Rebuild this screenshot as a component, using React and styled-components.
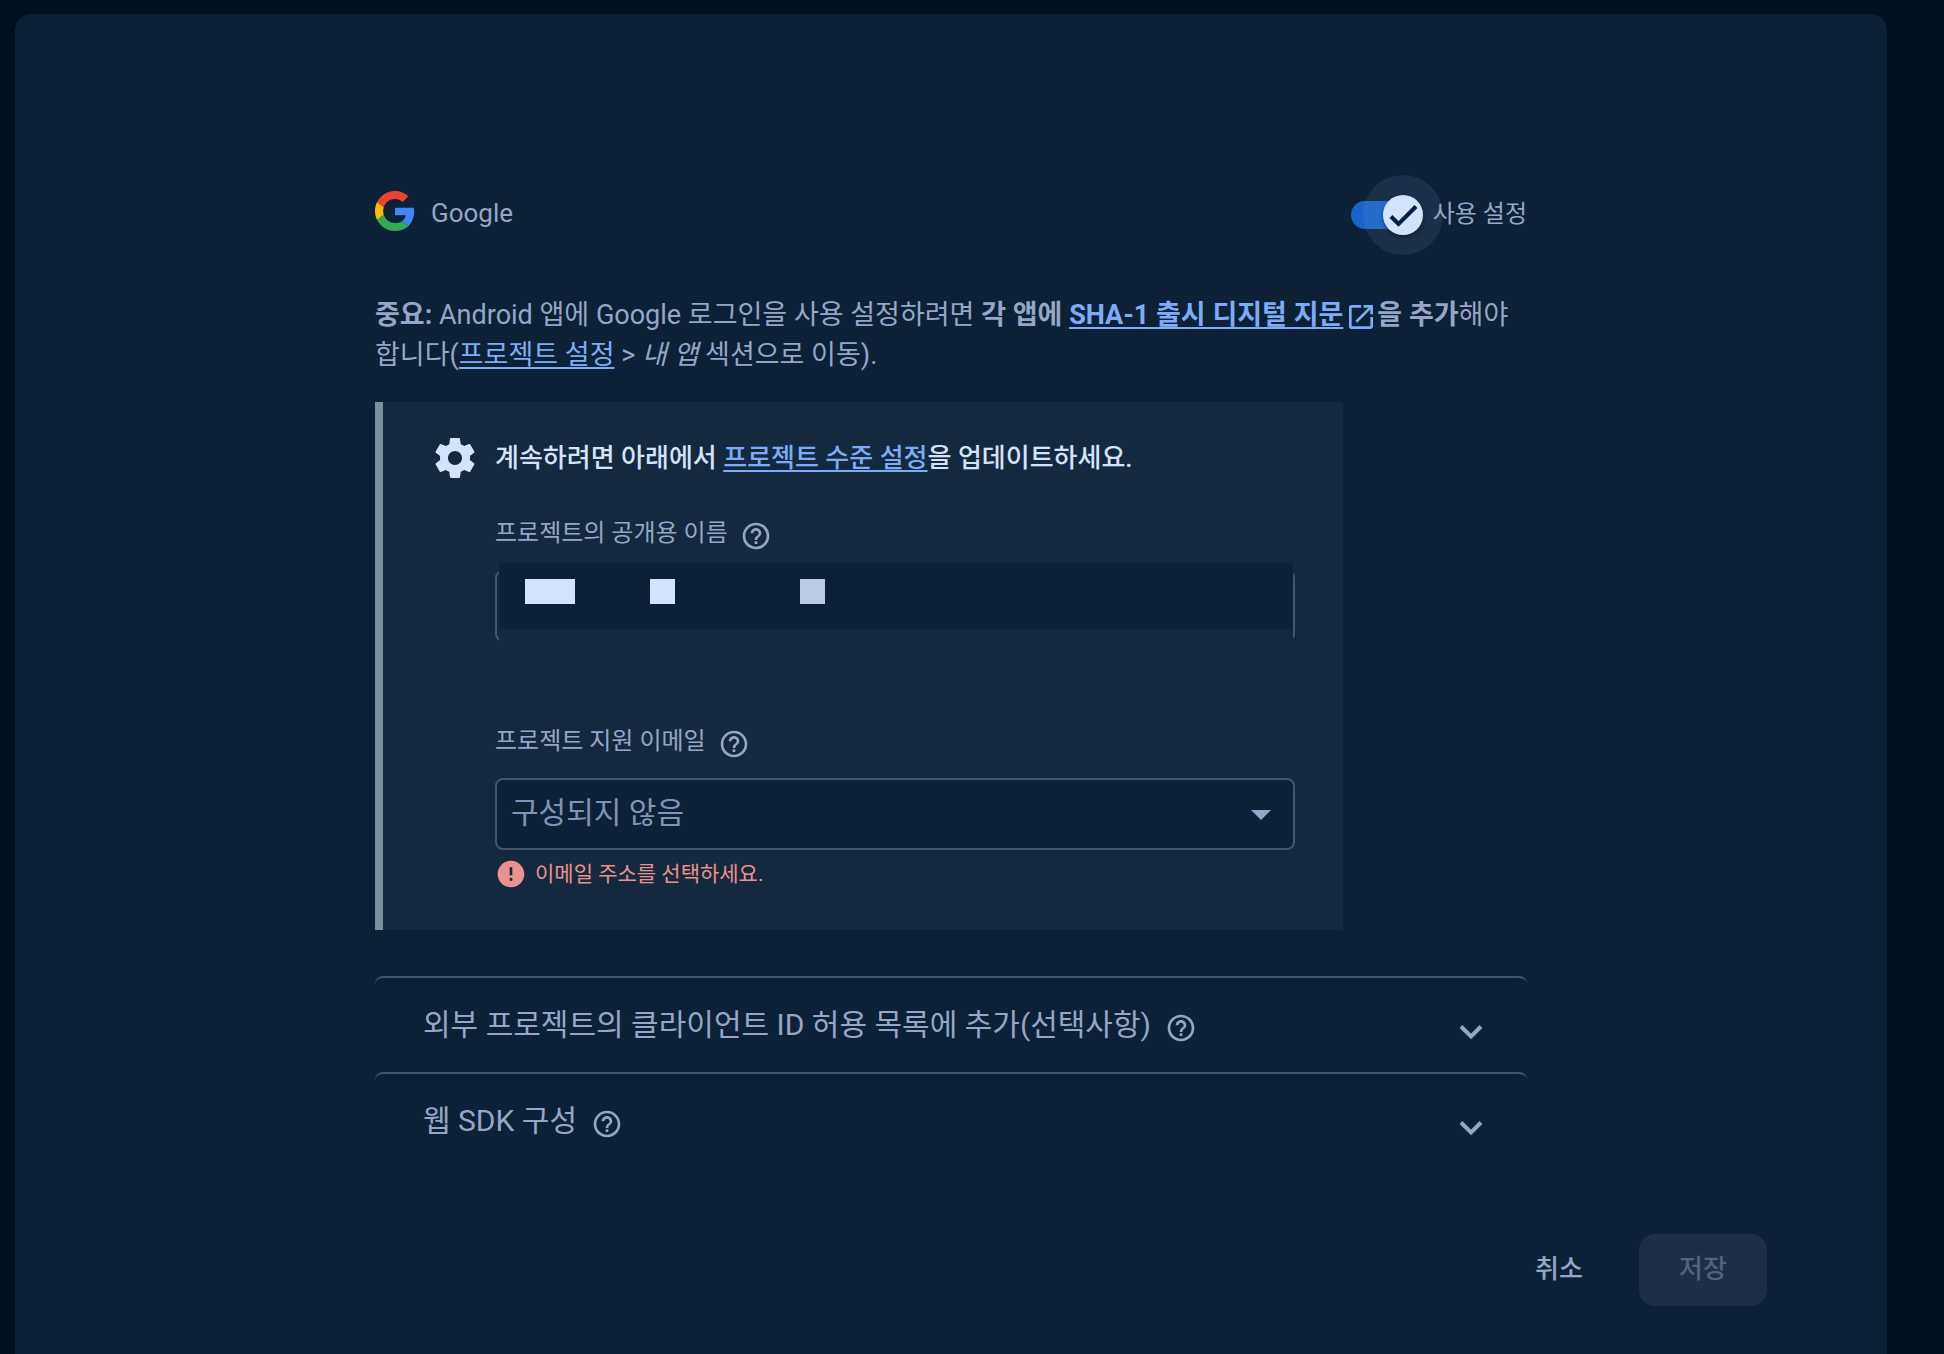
import React, { useState } from 'react'
import styled, { createGlobalStyle } from 'styled-components'
import {
	MdArrowDropDown,
	MdError,
	MdHelpOutline,
	MdOpenInNew,
} from 'react-icons/md'

const GlobalStyle = createGlobalStyle`
	* {
		box-sizing: border-box;
	}

	body {
		margin: 0;
		background: #011122;
		color: #96a6c6;
		font-family: Roboto, 'Noto Sans CJK KR', sans-serif;
		font-size: 26px;
		line-height: 40px;
		word-break: keep-all;
	}

	button,
	input,
	select {
		font: inherit;
		color: inherit;
	}
`

const GoogleLogo = () => (
	<svg width='40' height='40' viewBox='0 0 48 48' aria-hidden='true'>
		<path
			fill='#ea4335'
			d='M24 9.5c3.54 0 6.71 1.22 9.21 3.6l6.85-6.85C35.9 2.38 30.47 0 24 0 14.62 0 6.51 5.38 2.56 13.22l7.98 6.19C12.43 13.72 17.74 9.5 24 9.5z'
		/>
		<path
			fill='#4285f4'
			d='M46.98 24.55c0-1.57-.15-3.09-.38-4.55H24v9.02h12.94c-.58 2.96-2.26 5.48-4.78 7.18l7.73 6c4.51-4.18 7.09-10.36 7.09-17.65z'
		/>
		<path
			fill='#fbbc05'
			d='M10.53 28.59c-.48-1.45-.76-2.99-.76-4.59s.27-3.14.76-4.59l-7.98-6.19C.92 16.46 0 20.12 0 24c0 3.88.92 7.54 2.56 10.78l7.97-6.19z'
		/>
		<path
			fill='#34a853'
			d='M24 48c6.48 0 11.93-2.13 15.89-5.81l-7.73-6c-2.15 1.45-4.92 2.3-8.16 2.3-6.26 0-11.57-4.22-13.47-9.91l-7.98 6.19C6.51 42.62 14.62 48 24 48z'
		/>
	</svg>
)

const GearIcon = () => (
	<svg width='48' height='48' viewBox='0 0 24 24' fill='#d3e3fd' aria-hidden='true'>
		<path d='M19.43 12.98c.04-.32.07-.64.07-.98s-.03-.66-.07-.98l2.11-1.65c.19-.15.24-.42.12-.64l-2-3.46c-.12-.22-.39-.3-.61-.22l-2.49 1c-.52-.4-1.08-.73-1.69-.98l-.38-2.65C14.46 2.18 14.25 2 14 2h-4c-.25 0-.46.18-.49.42l-.38 2.65c-.61.25-1.17.59-1.69.98l-2.49-1c-.23-.09-.49 0-.61.22l-2 3.46c-.13.22-.07.49.12.64l2.11 1.65c-.04.32-.07.65-.07.98s.03.66.07.98l-2.11 1.65c-.19.15-.24.42-.12.64l2 3.46c.12.22.39.3.61.22l2.49-1c.52.4 1.08.73 1.69.98l.38 2.65c.03.24.24.42.49.42h4c.25 0 .46-.18.49-.42l.38-2.65c.61-.25 1.17-.59 1.69-.98l2.49 1c.23.09.49 0 .61-.22l2-3.46c.12-.22.07-.49-.12-.64l-2.11-1.65zM12 15.5c-1.93 0-3.5-1.57-3.5-3.5s1.57-3.5 3.5-3.5 3.5 1.57 3.5 3.5-1.57 3.5-3.5 3.5z' />
	</svg>
)

const ChevronIcon = () => (
	<svg width='24' height='16' viewBox='0 0 24 16' aria-hidden='true'>
		<path d='M2 2.5l10 10 10-10' fill='none' stroke='currentColor' strokeWidth='4' />
	</svg>
)

const CheckIcon = () => (
	<svg width='32' height='32' viewBox='0 0 32 32' aria-hidden='true'>
		<path d='M4 17.500l7.500 7.500L29 7.500' fill='none' stroke='#041e49' strokeWidth='4' />
	</svg>
)

const App = () => {
	const [enabled, setEnabled] = useState(true)

	return (
		<>
			<GlobalStyle />
			<Card>
				<Content>
					<Header>
						<Provider>
							<GoogleLogo />
							<span>Google</span>
						</Provider>
						<SwitchLabel>
							<Switch>
								<input
									type='checkbox'
									checked={enabled}
									onChange={(e) => setEnabled(e.target.checked)}
								/>
								<Thumb $on={enabled}>{enabled && <CheckIcon />}</Thumb>
							</Switch>
							<span>사용 설정</span>
						</SwitchLabel>
					</Header>

					<Notice>
						<b>중요:</b> Android 앱에 Google 로그인을 사용 설정하려면{' '}
						<b>
							각 앱에 <Anchor href='#sha'>SHA-1 출시 디지털 지문</Anchor>
							<MdOpenInNew />을 추가
						</b>
						해야 합니다(<Anchor href='#settings'>프로젝트 설정</Anchor> &gt;{' '}
						<i>내 앱</i> 섹션으로 이동).
					</Notice>

					<Callout>
						<CalloutTitle>
							<GearIcon />
							<p>
								계속하려면 아래에서{' '}
								<Anchor href='#project'>프로젝트 수준 설정</Anchor>을
								업데이트하세요.
							</p>
						</CalloutTitle>

						<Field>
							<FieldLabel>
								<label htmlFor='public-name'>프로젝트의 공개용 이름</label>
								<MdHelpOutline />
							</FieldLabel>
							<Control>
								<input id='public-name' type='text' />
								<Mask aria-hidden='true'>
									<Block $wide />
									<Block />
									<Block $dim />
								</Mask>
							</Control>
						</Field>

						<Field>
							<FieldLabel>
								<label htmlFor='support-email'>프로젝트 지원 이메일</label>
								<MdHelpOutline />
							</FieldLabel>
							<Control>
								<select id='support-email'>
									<option>구성되지 않음</option>
								</select>
								<MdArrowDropDown />
							</Control>
							<FieldError>
								<MdError />
								<span>이메일 주소를 선택하세요.</span>
							</FieldError>
						</Field>
					</Callout>

					<Section type='button'>
						<span>외부 프로젝트의 클라이언트 ID 허용 목록에 추가(선택사항)</span>
						<MdHelpOutline />
						<ChevronIcon />
					</Section>
					<Section type='button'>
						<span>웹 SDK 구성</span>
						<MdHelpOutline />
						<ChevronIcon />
					</Section>
				</Content>

				<Actions>
					<Button type='button'>취소</Button>
					<Button type='button' disabled>
						저장
					</Button>
				</Actions>
			</Card>
		</>
	)
}

export default App

const Card = styled.main`
	min-height: calc(100vh - 14px);
	margin: 14px 57px 0 15px;
	padding: 181px 24px 48px;
	border-radius: 16px 16px 0 0;
	background: #0c2136;
	box-shadow: 0 1px 4px rgba(0, 0, 0, 0.3);
`

const Content = styled.div`
	max-width: 1152px;
	margin: 0 auto;
`

const Header = styled.header`
	display: flex;
	justify-content: space-between;
	align-items: center;
	height: 40px;
`

const Provider = styled.div`
	display: flex;
	align-items: center;
	gap: 16px;
	padding-bottom: 8px;

	span {
		padding-top: 4px;
	}
`

const SwitchLabel = styled.label`
	display: flex;
	align-items: center;
	gap: 10px;
	font-size: 24px;
	cursor: pointer;

	> span:last-child {
		padding-bottom: 2px;
	}
`

const Switch = styled.span`
	position: relative;
	display: flex;

	input {
		appearance: none;
		width: 72px;
		height: 28px;
		margin: 0;
		border-radius: 14px;
		background: #1a63c9;
	}
`

const Thumb = styled.span`
	position: absolute;
	top: -6px;
	${(props) => (props.$on ? 'right: 0;' : 'left: 0;')}
	display: grid;
	place-items: center;
	width: 40px;
	height: 40px;
	border-radius: 50%;
	background: #d3e3fd;
	box-shadow: 0 2px 4px rgba(0, 0, 0, 0.4), 0 0 0 20px rgba(124, 165, 200, 0.13);
`

const Anchor = styled.a`
	color: #7cacf8;
	text-decoration: underline 2px;
	text-decoration-skip-ink: none;
	text-underline-offset: 3px;
`

const Notice = styled.p`
	margin: 60px 0 27px;
	font-size: 27px;

	svg {
		width: 32px;
		height: 32px;
		margin-left: 2px;
		color: #7cacf8;
		vertical-align: middle;
	}
`

const Callout = styled.section`
	max-width: 968px;
	margin-bottom: 46px;
	padding: 32px 48px 40px;
	border-left: 8px solid #78909c;
	background: #14293d;
`

const CalloutTitle = styled.div`
	display: flex;
	align-items: center;
	gap: 16px;
	color: #d3e3fd;
	font-weight: 500;

	p {
		margin: 0;
	}
`

const Field = styled.div`
	margin: 38px 0 0 64px;

	& + & {
		margin-top: 86px;
	}
`

const FieldLabel = styled.div`
	display: flex;
	align-items: center;
	gap: 12px;
	height: 32px;
	margin-bottom: 18px;
	font-size: 24px;

	label {
		padding-bottom: 6px;
	}

	svg {
		width: 32px;
		height: 32px;
	}
`

const Control = styled.div`
	position: relative;

	input,
	select {
		display: block;
		appearance: none;
		width: 100%;
		height: 72px;
		padding: 0 14px;
		border: 2px solid #44566c;
		border-radius: 8px;
		background: #14293d;
	}

	select {
		padding-bottom: 2px;
		background: #0c2136;
		color: #8294b4;
		font-size: 30px;
	}

	svg {
		position: absolute;
		top: 12px;
		right: 10px;
		width: 48px;
		height: 48px;
		pointer-events: none;
	}
`

/* covers the typed value */
const Mask = styled.div`
	position: absolute;
	top: -7px;
	right: 2px;
	bottom: -2px;
	left: 4px;
	display: flex;
	align-items: flex-start;
	padding: 16px 26px;
	border-bottom: 15px solid #14293d;
	background: #0c2136;
`

const Block = styled.span`
	width: ${(props) => (props.$wide ? 50 : 25)}px;
	height: 25px;
	margin-right: ${(props) => (props.$wide ? 75 : 125)}px;
	background: ${(props) => (props.$dim ? '#bccbe5' : '#d3e3fd')};
`

const FieldError = styled.div`
	display: flex;
	align-items: center;
	gap: 8px;
	margin-top: 8px;
	height: 32px;
	color: #ec928e;
	font-size: 21px;

	svg {
		width: 32px;
		height: 32px;
	}
`

const Section = styled.button`
	display: flex;
	align-items: center;
	gap: 14px;
	width: 100%;
	height: 96px;
	padding: 6px 44px 0 48px;
	border: 0;
	border-top: 2px solid #44566c;
	border-radius: 8px;
	background: none;
	font-size: 30px;
	text-align: left;
	cursor: pointer;

	span {
		padding-bottom: 6px;
	}

	svg {
		flex: none;
		width: 32px;
		height: 32px;
	}

	svg:last-child {
		width: 24px;
		height: 16px;
		margin: 8px 0 0 auto;
	}
`

const Actions = styled.footer`
	display: flex;
	justify-content: flex-end;
	gap: 16px;
	margin: 66px 96px 0 0;
`

const Button = styled.button`
	width: 128px;
	height: 72px;
	padding: 0 0 2px;
	border: 0;
	border-radius: 16px;
	background: none;
	font-weight: 500;
	cursor: pointer;

	&:disabled {
		background: #1e2f45;
		color: #52647d;
		cursor: default;
	}
`
